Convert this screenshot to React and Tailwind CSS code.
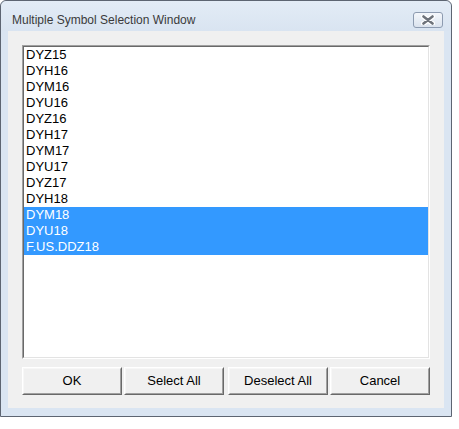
import React from "react";

const symbols = [
  "DYZ15", "DYH16", "DYM16", "DYU16", "DYZ16", "DYH17", "DYM17",
  "DYU17", "DYZ17", "DYH18", "DYM18", "DYU18", "F.US.DDZ18",
];
const selected = new Set(["DYM18", "DYU18", "F.US.DDZ18"]);

function CloseButton() {
  return (
    <div className="w-[30px] h-[16px] rounded-[3px] border border-[#8d9bb0] bg-gradient-to-b from-[#f4f7fb] to-[#dbe3ee] flex items-center justify-center">
      <svg width="14" height="10" viewBox="0 0 14 10">
        <path d="M2.5 1.5 L11.5 8.5 M11.5 1.5 L2.5 8.5" stroke="#ffffff" strokeWidth="5" strokeLinecap="round" />
        <path d="M2.5 1.5 L11.5 8.5 M11.5 1.5 L2.5 8.5" stroke="#6e737b" strokeWidth="2.6" strokeLinecap="round" />
      </svg>
    </div>
  );
}

function Button({ label, className = "" }) {
  return (
    <button
      className={`w-[100px] h-[28px] border border-t-white border-l-white border-b-[#696969] border-r-[#696969] bg-[#f0f0f0] ${className}`}
    >
      <div className="w-full h-full border border-t-[#f7f7f7] border-l-[#f7f7f7] border-b-[#a0a0a0] border-r-[#a0a0a0] flex items-center justify-center text-[13px] text-black">
        {label}
      </div>
    </button>
  );
}

export default function App() {
  return (
    <div
      className="w-[459px] h-[429px] bg-white"
      style={{ fontFamily: '"Liberation Sans", Arial, sans-serif' }}
    >
      <div className="w-[452px] h-[417px] border border-[#5d6572] rounded-t-[6px] bg-[#dae5f2] flex flex-col">
        {/* title bar */}
        <div className="h-[30px] flex items-start justify-between pt-[11px] pl-[11px] pr-[8px] rounded-t-[6px] bg-gradient-to-b from-[#e3ecf6] to-[#d9e4f1]">
          <span className="text-[12px] leading-[16px] text-[#3a3a3a]">
            Multiple Symbol Selection Window
          </span>
          <CloseButton />
        </div>

        {/* client area */}
        <div className="mx-[7px] h-[377px] bg-[#f0f0f0] flex flex-col px-[14px] pt-[14px] pb-[13px] gap-[8px]">
          <div className="h-[314px] border border-t-[#a0a0a0] border-l-[#a0a0a0] border-b-white border-r-white">
            <div className="w-full h-full border border-t-[#696969] border-l-[#696969] border-b-[#e3e3e3] border-r-[#e3e3e3] bg-white">
              {symbols.map((s) => (
                <div
                  key={s}
                  className={`h-[16px] leading-[16px] pl-[2px] text-[13px] ${
                    selected.has(s) ? "bg-[#3399ff] text-white" : "text-black"
                  }`}
                >
                  {s}
                </div>
              ))}
            </div>
          </div>

          <div className="flex gap-[2px]">
            <Button label="OK" />
            <Button label="Select All" />
            <Button label="Deselect All" className="ml-[2px]" />
            <Button label="Cancel" />
          </div>
        </div>
      </div>
    </div>
  );
}
